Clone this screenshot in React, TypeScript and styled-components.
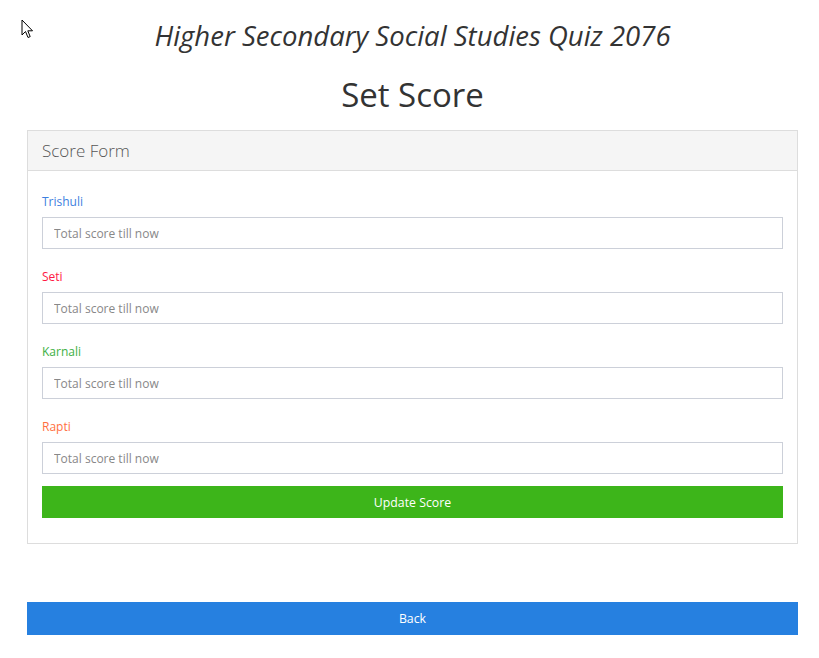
import React from "react";
import styled, { createGlobalStyle } from "styled-components";

const Global = createGlobalStyle`
  html, body { margin: 0; padding: 0; background: #fff; }
  body { font-family: "Open Sans", "Noto Sans", sans-serif; color: #333; }
  * { box-sizing: border-box; }
`;

const Page = styled.div`
  position: relative;
  padding: 0 21px 0 27px;
`;

const Cursor = styled.svg`
  position: absolute;
  left: 21px;
  top: 19px;
`;

const Title = styled.h2`
  margin: 0;
  padding-top: 18px;
  height: 58px;
  text-align: center;
  font-style: italic;
  font-weight: 400;
  font-size: 27.5px;
  line-height: 36px;
  color: #333;
`;

const Heading = styled.h1`
  margin: 0;
  height: 72px;
  padding-top: 17px;
  text-align: center;
  font-weight: 400;
  font-size: 33px;
  line-height: 40px;
  color: #333;
`;

const Panel = styled.section`
  border: 1px solid #ddd;
  background: #fff;
`;

const PanelHeader = styled.div`
  height: 40px;
  background: #f5f5f5;
  border-bottom: 1px solid #ddd;
  padding: 0 14px;
  display: flex;
  align-items: center;
  font-size: 17px;
  font-weight: 300;
  color: #555;
`;

const PanelBody = styled.div`
  padding: 21px 14px 25px;
`;

const Group = styled.div`
  display: flex;
  flex-direction: column;
  margin-bottom: 18px;
  &:last-of-type { margin-bottom: 12px; }
`;

const Label = styled.label<{ $color: string }>`
  font-size: 12px;
  line-height: 20px;
  height: 20px;
  margin-bottom: 5px;
  color: ${(p) => p.$color};
`;

const Input = styled.input`
  height: 32px;
  border: 1px solid #ccd0d9;
  padding: 0 11px;
  font-family: inherit;
  font-size: 12px;
  color: #555;
  outline: none;
  &::placeholder { color: #888; }
`;

const Button = styled.button<{ $bg: string; $h: number }>`
  display: block;
  width: 100%;
  height: ${(p) => p.$h}px;
  border: none;
  background: ${(p) => p.$bg};
  color: #fff;
  font-family: inherit;
  font-size: 12.3px;
  cursor: pointer;
`;

const Footer = styled.div`
  margin-top: 58px;
`;

const teams = [
  { name: "Trishuli", color: "#3d7fe0" },
  { name: "Seti", color: "#ff1744" },
  { name: "Karnali", color: "#3cb043" },
  { name: "Rapti", color: "#ff6f3f" },
];

export default function App() {
  return (
    <Page>
      <Global />
      <Cursor width="13" height="20" viewBox="0 0 13 20">
        <path
          d="M1 1 L1 16 L4.5 12.5 L7 18.5 L9.2 17.6 L6.8 11.8 L11.5 11.8 Z"
          fill="#fff"
          stroke="#000"
          strokeWidth="1"
          strokeLinejoin="miter"
        />
      </Cursor>
      <Title>Higher Secondary Social Studies Quiz 2076</Title>
      <Heading>Set Score</Heading>
      <Panel>
        <PanelHeader>Score Form</PanelHeader>
        <PanelBody>
          {teams.map((t) => (
            <Group key={t.name}>
              <Label $color={t.color}>{t.name}</Label>
              <Input placeholder="Total score till now" />
            </Group>
          ))}
          <Button $bg="#3db51a" $h={32}>Update Score</Button>
        </PanelBody>
      </Panel>
      <Footer>
        <Button $bg="#2680e0" $h={33}>Back</Button>
      </Footer>
    </Page>
  );
}
